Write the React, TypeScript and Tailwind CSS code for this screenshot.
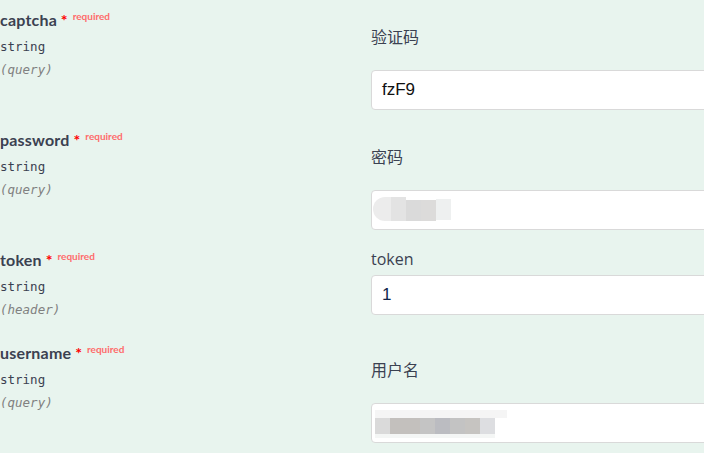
type Param = {
  name: string;
  type: string;
  where: string;
  label: string;
  value?: string;
  valueColor?: string;
  compact?: boolean;
  mosaic?: "password" | "username";
};

const params: Param[] = [
  { name: "captcha", type: "string", where: "(query)", label: "验证码", value: "fzF9", valueColor: "text-[#111111]" },
  { name: "password", type: "string", where: "(query)", label: "密码", mosaic: "password" },
  { name: "token", type: "string", where: "(header)", label: "token", value: "1", valueColor: "text-[#10264a]", compact: true },
  { name: "username", type: "string", where: "(query)", label: "用户名", mosaic: "username" },
];

// pixelated blur blobs that hide the filled-in values
function Mosaic({ kind }: { kind: "password" | "username" }) {
  if (kind === "password") {
    return (
      <div className="pointer-events-none absolute left-[1px] top-[6px] flex h-[24px]">
        <div className="h-full w-[18px] rounded-l-full bg-[#ececec]" />
        <div className="h-full w-[15px] bg-[#e3e3e3]" />
        <div className="mt-[3px] h-[21px] w-[15px] bg-[#dadada]" />
        <div className="mt-[3px] h-[21px] w-[15px] bg-[#dcdbda]" />
        <div className="mt-[2px] h-[21px] w-[15px] bg-[#eef0f0]" />
      </div>
    );
  }
  return (
    <div className="pointer-events-none absolute left-[3px] top-[6px] flex w-[135px] flex-col">
      <div className="h-[8px] w-[132px] bg-[#f5f5f5]" />
      <div className="flex h-[16px]">
        <div className="w-[15px] bg-[#dadada]" />
        <div className="w-[30px] bg-[#c3c0bd]" />
        <div className="w-[15px] bg-[#c4c4c4]" />
        <div className="w-[15px] bg-[#bbbcc1]" />
        <div className="w-[15px] bg-[#c3c3c3]" />
        <div className="w-[15px] bg-[#c6c4c1]" />
        <div className="w-[15px] bg-[#dddee1]" />
      </div>
      <div className="h-[4px] w-[120px] bg-[#f4f6f5]" />
    </div>
  );
}

function ParamRow({ p }: { p: Param }) {
  return (
    <div className="flex pt-[10px] pb-[10px]">
      <div className="w-[371px] shrink-0 pb-[4px]">
        <div className="h-[20px] whitespace-nowrap leading-[20px] text-[#3b4151]">
          <span className="font-['Lato',sans-serif] text-[16px] font-bold tracking-[0.2px]">{p.name}</span>
          <span className="font-['Lato',sans-serif] text-[16px] font-bold text-[#ff0000]">&nbsp;*</span>
          <span className="relative top-[-6px] pl-[5px] font-['Lato',sans-serif] text-[10px] font-bold text-[#ff6b6b]">
            required
          </span>
        </div>
        <div className="mt-[8px] h-[18px] font-['DejaVu_Sans_Mono',monospace] text-[12.5px] leading-[18px] text-[#3b4151]">
          {p.type}
        </div>
        <div className="mt-[5px] h-[18px] font-['DejaVu_Sans_Mono',monospace] text-[12.5px] italic leading-[18px] text-[#808080]">
          {p.where}
        </div>
      </div>
      <div className="flex-1 font-['Open_Sans','Noto_Sans_CJK_SC',sans-serif] text-[#3b4151]">
        <div
          className={
            p.compact
              ? "h-[18px] text-[16px] leading-[18px]"
              : "mt-[16px] h-[22px] text-[16px] leading-[22px]"
          }
        >
          {p.label}
        </div>
        <div
          className={
            "relative h-[40px] w-[340px] rounded-[4px] border border-[#d9d9d9] bg-white " +
            (p.compact ? "mt-[7px]" : "mt-[22px]")
          }
        >
          {p.value && (
            <div
              className={
                "pl-[10px] font-['Liberation_Sans',Arial,sans-serif] text-[17px] leading-[38px] " + p.valueColor
              }
            >
              {p.value}
            </div>
          )}
          {p.mosaic && <Mosaic kind={p.mosaic} />}
        </div>
      </div>
    </div>
  );
}

export default function App() {
  return (
    <div className="h-[453px] w-[704px] overflow-hidden bg-[#e8f4ee]">
      {params.map((p) => (
        <ParamRow key={p.name} p={p} />
      ))}
    </div>
  );
}
